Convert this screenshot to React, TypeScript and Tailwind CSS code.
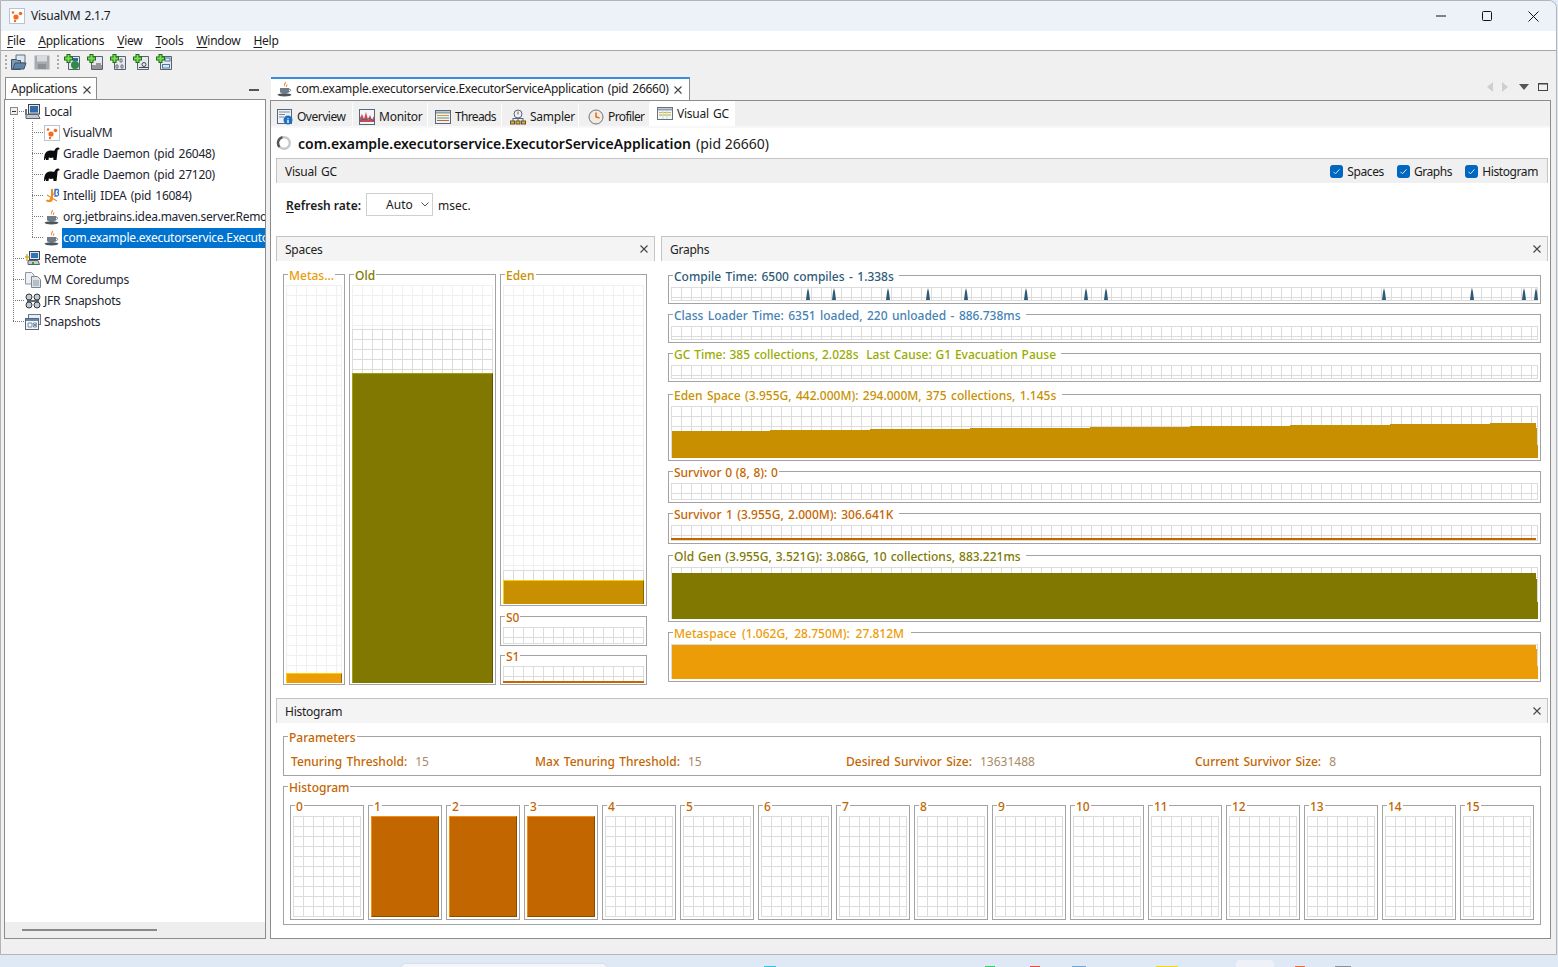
import type { ReactNode } from "react";

const GRID_DARK =
  "border-r border-b border-[#dcdcdc] bg-[linear-gradient(#dcdcdc_1px,transparent_1px),linear-gradient(90deg,#dcdcdc_1px,transparent_1px)] bg-[size:10px_10px]";
const GRID_LIGHT =
  "border-r border-[#f0f0f0] bg-[linear-gradient(#f0f0f0_1px,transparent_1px),linear-gradient(90deg,#f0f0f0_1px,transparent_1px)] bg-[size:10px_10px]";

const spikes = [808, 834, 888, 928, 966, 1026, 1086, 1106, 1384, 1472, 1524, 1536];

const edenPoints =
  "1,52 1,25 99,25 99,24 199,24 199,23 299,23 299,22 419,22 419,21 519,21 519,20 619,20 619,19 719,19 719,18 819,18 819,17 865,17 865,22 866,22 866,39 867,39 867,52";

function Icon({ children, className = "" }: { children: ReactNode; className?: string }) {
  return (
    <svg viewBox="0 0 16 16" className={`h-4 w-4 shrink-0 ${className}`} fill="none">
      {children}
    </svg>
  );
}

function VmIcon() {
  return (
    <Icon>
      <rect x="0.500" y="0.500" width="15" height="15" fill="#fff" stroke="#b9c4d0" />
      <circle cx="7" cy="9" r="2.600" fill="#f26b21" />
      <circle cx="11.500" cy="5.500" r="1.800" fill="#f26b21" />
      <circle cx="4" cy="4.500" r="1.300" fill="#f26b21" />
      <circle cx="6" cy="13" r="1.200" fill="#f26b21" />
    </Icon>
  );
}

function JavaIcon() {
  return (
    <Icon>
      <path d="M8.500 0.500c1.500 2-1.800 3-.8 5.500C6 4.500 7.500 2.500 8.500 0.500z" fill="#e8741e" />
      <path d="M10.300 3c.4 1.500-1 2-.8 3.500C8.300 5.500 9 4 10.300 3z" fill="#e8741e" />
      <path d="M3 7h9v3.500c0 1.500-1.700 2-4.500 2s-4.500-.5-4.500-2z" fill="#6f7c87" />
      <path d="M12 8c2.200 0 2.200 2.600-.4 2.700" stroke="#6f7c87" />
      <ellipse cx="7.500" cy="13.800" rx="7" ry="1.600" fill="#4a565f" />
    </Icon>
  );
}

function GradleIcon() {
  return (
    <Icon>
      <path
        d="M0 14C0 8 2 4.500 6 4.500c2 0 3 .5 4.500 0 .5-1.500 1.500-3 3.500-3 1.500 0 2 1.500 1 2.200-.9-.6-1.300-.1-1.500 1.300-.3 3-.6 6-1 9H9.500L9.200 11.500c-1.500.5-3 .5-4.400 0L4.500 14H2l-.2-2.200L1 14z"
        fill="#0c0c0c"
      />
    </Icon>
  );
}

function IdeaIcon() {
  return (
    <Icon>
      <path d="M8 1v9.500c0 3-4 3.500-5.500 1.500" stroke="#f28c1e" strokeWidth="2" />
      <path d="M3 7l10 6M5 13l7-11" stroke="#f28c1e" strokeWidth="1.200" />
      <path d="M11 1.500h2.500c1.500 0 1.500 3-.5 3 2.500 0 2 3.500-.5 3.500H11z" stroke="#2f6fd0" strokeWidth="1.300" />
    </Icon>
  );
}

function ComputerIcon() {
  return (
    <Icon>
      <rect x="3.500" y="0.500" width="11" height="9.500" fill="#dfe6ee" stroke="#3c4650" />
      <rect x="5" y="2" width="8" height="6.500" fill="#3469a8" />
      <path d="M1 10.500h12l2 4H1z" fill="#c4c9ce" stroke="#5a636c" />
      <path d="M1 5v6" stroke="#6b747d" strokeWidth="2" />
    </Icon>
  );
}

function RemoteIcon() {
  return (
    <Icon>
      <rect x="4.500" y="0.500" width="10" height="8" fill="#dfe6ee" stroke="#3c4650" />
      <rect x="6" y="2" width="7" height="5" fill="#2f74b5" />
      <path d="M3 9.500h10l1.500 4H3z" fill="#c4c9ce" stroke="#5a636c" />
      <path d="M0 6h5M2 3v7" stroke="#b58a20" />
      <circle cx="2" cy="6" r="1.500" fill="#e8b020" />
      <path d="M7 12h2" stroke="#35a035" strokeWidth="2" />
    </Icon>
  );
}

function DumpIcon() {
  return (
    <Icon>
      <path d="M0.500 0.500h6l2.500 2.500v9H0.500z" fill="#eef1f4" stroke="#8b96a0" />
      <path d="M6.500 4.500h6l3 3v8h-9z" fill="#dfe4ea" stroke="#7a8590" />
      <path d="M8 9h6M8 11h6M8 13h6" stroke="#8b96a0" />
    </Icon>
  );
}

function JfrIcon() {
  return (
    <Icon>
      <circle cx="4" cy="4" r="3" fill="#c5cad0" stroke="#2f3840" />
      <circle cx="12" cy="4" r="3" fill="#c5cad0" stroke="#2f3840" />
      <circle cx="4" cy="12" r="3" fill="#c5cad0" stroke="#2f3840" />
      <circle cx="12" cy="12" r="3" fill="#c5cad0" stroke="#2f3840" />
      <path d="M2 8h12" stroke="#2f3840" strokeWidth="1.500" />
    </Icon>
  );
}

function SnapshotIcon() {
  return (
    <Icon>
      <rect x="3.500" y="0.500" width="12" height="10" fill="#e8edf3" stroke="#6c7a88" />
      <rect x="0.500" y="4.500" width="13" height="11" fill="#f3f6f9" stroke="#56677a" />
      <path d="M1 5h12v2H1z" fill="#5b89b8" />
      <path d="M3 9h4v4H3zM8.500 9h3v1.500h-3zM8.500 11.500h3V13h-3z" stroke="#7c8a98" />
    </Icon>
  );
}

function ToolDoc({ children }: { children: ReactNode }) {
  return (
    <Icon>
      <path d="M4.500 2.500h11v13h-11z" fill="#e6eaee" stroke="#56636e" />
      {children}
      <path d="M4.500 0v9M0 4.500h9" stroke="#1e6a1e" strokeWidth="4" />
      <path d="M4.500 1v7M1 4.500h7" stroke="#7ae04a" strokeWidth="2" />
    </Icon>
  );
}

function CloseGlyph({ className = "" }: { className?: string }) {
  return (
    <svg viewBox="0 0 8 8" className={`h-2 w-2 shrink-0 ${className}`} fill="none">
      <path d="M0.500 0.500l7 7M7.500 0.500l-7 7" stroke="#444" strokeWidth="1.100" />
    </svg>
  );
}

function Mnemonic({ text }: { text: string }) {
  return (
    <span>
      <span className="underline underline-offset-2">{text[0]}</span>
      {text.slice(1)}
    </span>
  );
}

function TreeRow({
  level,
  icon,
  label,
  selected,
}: {
  level: 1 | 2;
  icon: ReactNode;
  label: string;
  selected?: boolean;
}) {
  return (
    <div className={`relative flex h-[21px] items-center ${level === 1 ? "pl-[19px]" : "pl-[38px]"}`}>
      <span
        className={`absolute top-[10px] h-0 border-t border-dotted border-[#777] ${
          level === 1 ? "left-[7px] w-[11px]" : "left-[26px] w-[11px]"
        }`}
      />
      {icon}
      <span
        className={`ml-[2px] flex flex-1 items-center overflow-hidden whitespace-nowrap pl-px ${
          selected ? "h-[20px] bg-[#0072cf] text-white" : "h-[21px] text-[#1b2530]"
        }`}
      >
        {label}
      </span>
    </div>
  );
}

function LeftPanel() {
  return (
    <div className="flex w-[262px] flex-col">
      <div className="flex h-[23px] items-end pl-px">
        <div className="relative flex h-[22px] w-[92px] items-center border border-b-0 border-[#8c8c8c] bg-white pl-[5px] pt-px">
          Applications
          <CloseGlyph className="absolute left-[77px] top-[8px]" />
        </div>
        <div className="mb-[8px] ml-auto mr-[7px] h-px w-[10px] border-t-2 border-[#555]" />
      </div>
      <div className="flex flex-1 flex-col border border-[#8c8c8c] bg-white">
        <div className="relative flex-1 pl-px pt-[1px]">
          <span className="absolute left-[8px] top-[18px] h-[203px] border-l border-dotted border-[#777]" />
          <span className="absolute left-[27px] top-[22px] h-[115px] border-l border-dotted border-[#777]" />
          <TreeRow level={1} icon={<ComputerIcon />} label="Local" />
          <span className="absolute left-[5px] top-[7px] flex h-[8px] w-[8px] items-center justify-center border border-[#8a8a8a] bg-[#eef0f2]">
            <span className="h-px w-[4px] bg-[#333]" />
          </span>
          <TreeRow level={2} icon={<VmIcon />} label="VisualVM" />
          <TreeRow level={2} icon={<GradleIcon />} label="Gradle Daemon (pid 26048)" />
          <TreeRow level={2} icon={<GradleIcon />} label="Gradle Daemon (pid 27120)" />
          <TreeRow level={2} icon={<IdeaIcon />} label="IntelliJ IDEA (pid 16084)" />
          <TreeRow level={2} icon={<JavaIcon />} label="org.jetbrains.idea.maven.server.RemoteMavenServer36" />
          <TreeRow level={2} icon={<JavaIcon />} label="com.example.executorservice.ExecutorServiceApplication" selected />
          <TreeRow level={1} icon={<RemoteIcon />} label="Remote" />
          <TreeRow level={1} icon={<DumpIcon />} label="VM Coredumps" />
          <TreeRow level={1} icon={<JfrIcon />} label="JFR Snapshots" />
          <TreeRow level={1} icon={<SnapshotIcon />} label="Snapshots" />
        </div>
        <div className="flex h-[16px] items-center bg-[#eeeeee] pl-[17px]">
          <div className="h-[2px] w-[135px] bg-[#888]" />
        </div>
      </div>
    </div>
  );
}

function SubTab({
  icon,
  label,
  className,
  active,
}: {
  icon: ReactNode;
  label: string;
  className: string;
  active?: boolean;
}) {
  return (
    <div
      className={`flex items-center gap-[4px] ${className} ${
        active ? "h-[25px] bg-white pt-px" : "mt-[2px] h-[23px] border-r border-white bg-[#f0f0f0] pt-[4px]"
      }`}
    >
      {icon}
      {label}
    </div>
  );
}

function Check({ label }: { label: string }) {
  return (
    <div className="flex items-center gap-[4px] pt-px tracking-[-0.4px]">
      <span className="flex h-[13px] w-[13px] items-center justify-center rounded-[3px] bg-[#0067c0]">
        <svg viewBox="0 0 9 9" className="h-[9px] w-[9px]" fill="none">
          <path d="M1.500 4.800l2 2 4-4.500" stroke="#cfe4f7" />
        </svg>
      </span>
      {label}
    </div>
  );
}

function PanelHeader({ title, close }: { title: string; close?: boolean }) {
  return (
    <div className="flex h-[25px] items-center justify-between border-x border-t border-[#c4c4c4] bg-[#f4f4f4] pl-[8px] pr-[6px] pt-px text-[#222]">
      {title}
      {close && <CloseGlyph className="mb-[2px]" />}
    </div>
  );
}

function Titled({
  title,
  color,
  className,
  children,
}: {
  title: string;
  color: string;
  className: string;
  children?: ReactNode;
}) {
  return (
    <div className={`relative border border-[#a3a3a3] ${className}`}>
      <span
        className={`absolute -top-[7px] left-[4px] whitespace-pre bg-white px-px font-medium leading-[16px] tracking-normal ${color}`}
      >
        {title}
      </span>
      {children}
    </div>
  );
}

function SpaceBar({
  title,
  color,
  className,
  lightClass,
  darkClass,
  barClass,
}: {
  title: string;
  color: string;
  className: string;
  lightClass: string;
  darkClass: string;
  barClass: string;
}) {
  return (
    <Titled title={title} color={color} className={`flex flex-col px-[2px] pb-[1px] pt-[10px] ${className}`}>
      <div className={`${GRID_LIGHT} ${lightClass}`} />
      <div className={`${GRID_DARK} border-b-0 ${darkClass}`} />
      <div className={barClass} />
    </Titled>
  );
}

function SpacesPanel() {
  return (
    <div className="flex w-[379px] flex-col">
      <PanelHeader title="Spaces" close />
      <div className="flex gap-[4px] pl-[7px] pt-[13px]">
        <SpaceBar
          title="Metas..."
          color="text-[#eb9c07]"
          className="h-[411px] w-[62px]"
          lightClass="flex-1"
          darkClass="h-0"
          barClass="h-[10px] border-t border-l border-t-[#ffcc00] border-l-[#ffcc00] border-r border-r-[#9c6800] bg-[#eb9c07]"
        />
        <SpaceBar
          title="Old"
          color="text-[#807800]"
          className="h-[411px] w-[147px]"
          lightClass="h-[44px]"
          darkClass="h-[44px]"
          barClass="flex-1 border-t border-l border-t-[#a8a000] border-l-[#a8a000] border-r border-r-[#5c5600] bg-[#807800]"
        />
        <div className="flex w-[147px] flex-col">
          <SpaceBar
            title="Eden"
            color="text-[#c89000]"
            className="h-[332px]"
            lightClass="flex-1"
            darkClass="h-[10px]"
            barClass="h-[24px] border-t border-l border-t-[#ffcc00] border-l-[#ffcc00] border-r border-r-[#8f6700] bg-[#c89000]"
          />
          <Titled title="S0" color="text-[#c46500]" className="mt-[10px] flex h-[30px] flex-col px-[2px] pb-[1px] pt-[10px]">
            <div className={`flex-1 ${GRID_DARK}`} />
          </Titled>
          <Titled title="S1" color="text-[#c46500]" className="mt-[9px] flex h-[30px] flex-col px-[2px] pb-[1px] pt-[10px]">
            <div className={`flex-1 ${GRID_DARK} border-b-0`} />
            <div className="h-[2px] bg-[#c46500]" />
          </Titled>
        </div>
      </div>
    </div>
  );
}

function GraphBox({
  title,
  color,
  className,
  children,
}: {
  title: string;
  color: string;
  className: string;
  children?: ReactNode;
}) {
  return (
    <Titled title={title} color={color} className={`flex flex-col px-[2px] pb-[2px] pt-[11px] ${className}`}>
      <div className={`relative flex-1 ${GRID_DARK}`}>{children}</div>
    </Titled>
  );
}

function Chart({ points, fill }: { points: string; fill: string }) {
  return (
    <svg className="absolute inset-0 h-full w-full overflow-visible" fill="none">
      <polygon points={points} fill={fill} />
    </svg>
  );
}

function GraphsPanel() {
  return (
    <div className="flex w-[887px] flex-col">
      <PanelHeader title="Graphs" close />
      <div className="flex flex-col px-[7px] pt-[14px] [word-spacing:1.300px]">
        <GraphBox title="Compile Time: 6500 compiles - 1.338s " color="text-[#2d5a78]" className="h-[29px]">
          <svg className="absolute inset-0 h-full w-full overflow-visible" fill="none">
            {spikes.map((s) => (
              <polygon key={s} points={`${s - 673},13 ${s - 672},5 ${s - 671},1 ${s - 670},5 ${s - 669},13`} fill="#2f5a73" />
            ))}
          </svg>
        </GraphBox>
        <GraphBox title="Class Loader Time: 6351 loaded, 220 unloaded - 886.738ms " color="text-[#4682b4]" className="mt-[10px] h-[29px]" />
        <GraphBox
          title="GC Time: 385 collections, 2.028s  Last Cause: G1 Evacuation Pause "
          color="text-[#9aab00]"
          className="mt-[10px] h-[29px] [word-spacing:0.700px]"
        />
        <GraphBox title="Eden Space (3.955G, 442.000M): 294.000M, 375 collections, 1.145s " color="text-[#c89000]" className="mt-[12px] h-[67px]">
          <Chart points={edenPoints} fill="#c89000" />
        </GraphBox>
        <GraphBox title="Survivor 0 (8, 8): 0" color="text-[#c46500]" className="mt-[10px] h-[32px] [word-spacing:0.600px]" />
        <GraphBox title="Survivor 1 (3.955G, 2.000M): 306.641K " color="text-[#c46500]" className="mt-[10px] h-[31px]">
          <div className="absolute bottom-0 left-0 h-[2px] w-[865px] bg-[#c46500]" />
        </GraphBox>
        <GraphBox
          title="Old Gen (3.955G, 3.521G): 3.086G, 10 collections, 883.221ms "
          color="text-[#807800]"
          className="mt-[11px] h-[67px] [word-spacing:0.900px]"
        >
          <Chart points="1,52 1,6 865,6 865,12 866,12 866,35 867,35 867,52" fill="#807800" />
        </GraphBox>
        <GraphBox
          title="Metaspace (1.062G, 28.750M): 27.812M "
          color="text-[#eb9c07]"
          className="mt-[10px] h-[50px] [word-spacing:2.600px]"
        >
          <Chart points="1,35 1,1 865,1 865,5 866,5 866,22 867,22 867,35" fill="#eb9c07" />
        </GraphBox>
      </div>
    </div>
  );
}

function Param({ label, value, className }: { label: string; value: string; className: string }) {
  return (
    <div className={`flex shrink-0 gap-[8px] ${className}`}>
      <span className="font-medium tracking-normal text-[#c46500] [word-spacing:1.300px]">{label}</span>
      <span className="tracking-normal text-[#a88a66]">{value}</span>
    </div>
  );
}

function HistogramPanel() {
  const cells = Array.from({ length: 16 }, (_, i) => i);
  return (
    <div className="flex flex-col">
      <PanelHeader title="Histogram" close />
      <div className="flex flex-col px-[7px] pt-[13px]">
        <Titled title="Parameters" color="text-[#c46500]" className="flex h-[40px] items-center pl-[7px] pt-[11px]">
          <Param label="Tenuring Threshold:" value="15" className="w-[244px]" />
          <Param label="Max Tenuring Threshold:" value="15" className="w-[311px]" />
          <Param label="Desired Survivor Size:" value="13631488" className="w-[349px]" />
          <Param label="Current Survivor Size:" value="8" className="w-[200px]" />
        </Titled>
        <Titled title="Histogram" color="text-[#c46500]" className="mt-[10px] flex h-[139px] gap-[4px] pl-[6px] pt-[18px]">
          {cells.map((i) => (
            <Titled key={i} title={String(i)} color="text-[#c46500]" className="flex h-[115px] w-[74px] flex-col px-[2px] pb-[2px] pt-[10px]">
              {i >= 1 && i <= 3 ? (
                <div className="flex-1 border-y border-x border-t-[#ff8c00] border-l-[#ff8c00] border-r-[#8a4a00] border-b-[#8a4a00] bg-[#c26600]" />
              ) : (
                <div className={`flex-1 ${GRID_DARK}`} />
              )}
            </Titled>
          ))}
        </Titled>
      </div>
    </div>
  );
}

export default function App() {
  return (
    <div className="h-[967px] w-[1558px] overflow-hidden bg-[#dfe8f5] font-['Noto_Sans','Liberation_Sans',sans-serif] text-[12px] leading-[16px] tracking-[-0.25px] text-[#1b1b1b] [word-spacing:1.300px]">
      <div className="flex h-[955px] w-[1557px] flex-col rounded-tr-[8px] border border-[#b4b4b4] bg-[#f0f0f0]">
        {/* title bar */}
        <div className="flex h-[30px] items-center rounded-tr-[8px] bg-[#edf2f9] pl-[8px]">
          <VmIcon />
          <span className="ml-[6px]">VisualVM 2.1.7</span>
          <div className="ml-auto flex items-center gap-[36px] pr-[17px]">
            <svg viewBox="0 0 10 10" className="h-[10px] w-[10px]" fill="none">
              <path d="M0 5h10" stroke="#111" />
            </svg>
            <svg viewBox="0 0 10 10" className="h-[10px] w-[10px]" fill="none">
              <rect x="0.500" y="0.500" width="9" height="9" rx="1" stroke="#111" />
            </svg>
            <svg viewBox="0 0 11 11" className="h-[11px] w-[11px]" fill="none">
              <path d="M0.500 0.500l10 10M10.500 0.500l-10 10" stroke="#111" />
            </svg>
          </div>
        </div>
        {/* menu */}
        <div className="flex h-[20px] items-center gap-[13px] border-b border-[#a8a8a8] bg-white pl-[6px] pt-px">
          <Mnemonic text="File" />
          <Mnemonic text="Applications" />
          <Mnemonic text="View" />
          <Mnemonic text="Tools" />
          <Mnemonic text="Window" />
          <Mnemonic text="Help" />
        </div>
        {/* toolbar */}
        <div className="flex h-[25px] items-center pb-[3px] pl-[4px]">
          <span className="h-[14px] border-l-2 border-dotted border-[#aaa]" />
          <svg viewBox="0 0 16 16" className="ml-[4px] h-4 w-4" fill="none">
            <path d="M5 1h9v8H5z" fill="#dfe6ee" stroke="#5c7388" />
            <path d="M0.500 5.500h5l1 1h3v9h-9z" fill="#7f9ab3" stroke="#3f5468" />
            <path d="M2 15l2-6h11l-2 6z" fill="#5f86a8" stroke="#3f5468" />
          </svg>
          <svg viewBox="0 0 16 16" className="ml-[7px] h-4 w-4" fill="none">
            <rect x="0.500" y="1.500" width="15" height="14" fill="#a5abb0" />
            <rect x="3" y="1.500" width="10" height="6" fill="#d8dbde" />
            <rect x="4" y="10" width="8" height="5" fill="#8b9196" />
          </svg>
          <span className="ml-[7px] h-[14px] border-l-2 border-dotted border-[#aaa]" />
          <div className="ml-[5px] flex gap-[7px]">
            <ToolDoc>
              <circle cx="11" cy="11" r="4" fill="#2f8a4a" />
              <path d="M9 4h5v3H9z" fill="#3469a8" />
            </ToolDoc>
            <ToolDoc>
              <path d="M5 12h10M5 14h10M9 10h5" stroke="#444" />
            </ToolDoc>
            <ToolDoc>
              <path d="M10 5h2v3h-2zM6 11h2v3H6zM11 11h2v3h-2z" stroke="#556" strokeWidth="0.800" />
            </ToolDoc>
            <ToolDoc>
              <path d="M6 13.500h9" stroke="#444" />
              <circle cx="11" cy="10.500" r="2" stroke="#444" />
            </ToolDoc>
            <ToolDoc>
              <rect x="9" y="4" width="5" height="3" fill="#dbe6f0" stroke="#4b7ba8" />
              <rect x="6.500" y="10.500" width="7" height="3.500" fill="#dbe6f0" stroke="#4b7ba8" />
            </ToolDoc>
          </div>
        </div>
        {/* workspace */}
        <div className="flex flex-1 gap-[4px] pb-[15px] pl-[3px]">
          <LeftPanel />
          <div className="flex w-[1281px] flex-col">
            {/* document tab strip */}
            <div className="flex h-[24px] items-end">
              <div className="ml-px flex h-[23px] w-[419px] items-center border-t-2 border-r border-t-[#3a8ee0] border-r-[#8c8c8c] bg-white pb-[2px] pl-[6px] tracking-[-0.28px]">
                <JavaIcon />
                <span className="ml-[3px] whitespace-nowrap">com.example.executorservice.ExecutorServiceApplication (pid 26660)</span>
                <CloseGlyph className="ml-[5px] mt-[2px]" />
              </div>
              <div className="mb-[8px] ml-auto mr-[3px] flex items-center gap-[9px]">
                <svg viewBox="0 0 6 10" className="h-[10px] w-[6px]">
                  <path d="M6 0v10L0 5z" fill="#cfcfcf" />
                </svg>
                <svg viewBox="0 0 6 10" className="h-[10px] w-[6px]">
                  <path d="M0 0v10l6-5z" fill="#cfcfcf" />
                </svg>
                <svg viewBox="0 0 10 6" className="ml-[2px] h-[6px] w-[10px]">
                  <path d="M0 0h10L5 6z" fill="#555" />
                </svg>
                <svg viewBox="0 0 10 8" className="h-[8px] w-[10px]" fill="none">
                  <rect x="0.500" y="0.500" width="9" height="7" stroke="#444" />
                  <path d="M0 1h10" stroke="#444" />
                </svg>
              </div>
            </div>
            <div className="flex flex-1 flex-col border border-[#8c8c8c] bg-white">
              {/* view tabs */}
              <div className="flex h-[27px] border-b-2 border-[#f8f8f8] bg-[#f0f0f0] pl-[1px]">
                <SubTab
                  className="w-[81px] pl-[5px] tracking-[-0.5px]"
                  label="Overview"
                  icon={
                    <Icon>
                      <rect x="0.500" y="0.500" width="14" height="14" fill="#eef2f6" stroke="#55687a" />
                      <path d="M2 3h11M2 5.500h6M2 8h5" stroke="#7b8c9c" />
                      <circle cx="11" cy="11" r="4.500" fill="#1f6fc0" />
                      <path d="M11 9v.8M11 10.800V14" stroke="#fff" strokeWidth="1.400" />
                    </Icon>
                  }
                />
                <SubTab
                  className="w-[75px] pl-[6px]"
                  label="Monitor"
                  icon={
                    <Icon>
                      <rect x="0.500" y="0.500" width="15" height="15" fill="#f3f5f8" stroke="#55687a" />
                      <path d="M1 13V9l2-4 2 5 2-7 2 8 2-5 2 5 2-4v6z" fill="#cf4a4a" />
                      <path d="M1 13l3-3 3 1 3-2 5 3" stroke="#3469a8" />
                    </Icon>
                  }
                />
                <SubTab
                  className="w-[74px] pl-[7px] tracking-[-0.65px]"
                  label="Threads"
                  icon={
                    <Icon>
                      <rect x="0.500" y="1.500" width="15" height="13" fill="#eef2f6" stroke="#55687a" />
                      <path d="M1 3.500h14" stroke="#8fa0b0" strokeWidth="2" />
                      <path d="M2 6.500h12" stroke="#e09a30" />
                      <path d="M2 9h12" stroke="#5aa04a" />
                      <path d="M2 11.500h12" stroke="#c85a4a" />
                    </Icon>
                  }
                />
                <SubTab
                  className="w-[77px] pl-[8px]"
                  label="Sampler"
                  icon={
                    <Icon>
                      <circle cx="8" cy="5" r="4" fill="#eef2f6" stroke="#55687a" />
                      <path d="M8 2.500v3" stroke="#b04030" />
                      <path d="M3 9v3M8 9v3M13 9v3M3 9.500h10" stroke="#55687a" />
                      <rect x="0.500" y="12" width="4" height="3" fill="#e0b050" stroke="#6a5020" />
                      <rect x="6" y="12" width="4" height="3" fill="#e0b050" stroke="#6a5020" />
                      <rect x="11.500" y="12" width="4" height="3" fill="#e0b050" stroke="#6a5020" />
                    </Icon>
                  }
                />
                <SubTab
                  className="w-[71px] pl-[9px] tracking-[-0.6px]"
                  label="Profiler"
                  icon={
                    <Icon>
                      <circle cx="8" cy="8" r="7" fill="#f2ece0" stroke="#6a7580" />
                      <path d="M8 3.500V8l3.500 1" stroke="#e06a20" strokeWidth="1.500" />
                    </Icon>
                  }
                />
                <SubTab
                  active
                  className="w-[85px] pl-[7px]"
                  label="Visual GC"
                  icon={
                    <Icon>
                      <rect x="0.500" y="1.500" width="15" height="12" fill="#f3f5f8" stroke="#66727e" />
                      <path d="M1 3.500h14" stroke="#8fa0b0" strokeWidth="2" />
                      <path d="M2 6.500h12" stroke="#e0b030" />
                      <path d="M2 9h12" stroke="#8fbf30" />
                      <path d="M6 5v8M10 5v8" stroke="#d4d8dc" />
                    </Icon>
                  }
                />
              </div>
              <div className="flex flex-col pl-[5px] pr-[2px]">
                <div className="flex h-[30px] items-center text-[14px] tracking-normal [word-spacing:0px]">
                  <svg viewBox="0 0 16 16" className="mb-[1px] h-4 w-4" fill="none">
                    <circle cx="8" cy="8" r="5.800" stroke="#c8c8c8" strokeWidth="2.400" />
                    <path d="M3.500 12a6 6 0 0 1 3-9.800" stroke="#555" strokeWidth="2.400" />
                  </svg>
                  <span className="ml-[6px] pt-px font-semibold text-[#111]">com.example.executorservice.ExecutorServiceApplication</span>
                  <span className="ml-[5px] pt-px text-[#222]">(pid 26660)</span>
                </div>
                <div className="flex h-[25px] items-center justify-between border-x border-t border-[#c4c4c4] bg-[#f0f0f0] pl-[8px] pr-[9px]">
                  <span className="pt-px">Visual GC</span>
                  <div className="flex gap-[13px]">
                    <Check label="Spaces" />
                    <Check label="Graphs" />
                    <Check label="Histogram" />
                  </div>
                </div>
                <div className="flex h-[53px] items-start pl-[10px] pt-[10px] tracking-normal [word-spacing:0px]">
                  <span className="mt-[5px] font-semibold">
                    <Mnemonic text="Refresh rate:" />
                  </span>
                  <div className="ml-[5px] flex h-[23px] w-[67px] items-center border border-[#cfcfcf] pl-[19px]">
                    Auto
                    <svg viewBox="0 0 8 5" className="ml-[8px] h-[5px] w-[8px]" fill="none">
                      <path d="M0.500 0.500L4 4l3.500-3.500" stroke="#555" />
                    </svg>
                  </div>
                  <span className="ml-[5px] mt-[5px]">msec.</span>
                </div>
                <div className="flex h-[462px] gap-[6px]">
                  <SpacesPanel />
                  <GraphsPanel />
                </div>
                <HistogramPanel />
              </div>
            </div>
          </div>
        </div>
      </div>
      {/* bits of the desktop taskbar under the window */}
      <div className="relative h-[12px]">
        <span className="absolute left-[400px] top-[8px] h-[6px] w-[208px] rounded-t-[8px] border border-[#d8dde6] bg-[#f4f6fa]" />
        <span className="absolute left-[764px] top-[11px] h-[2px] w-[12px] bg-[#2fc6d8]" />
        <span className="absolute left-[985px] top-[11px] h-[2px] w-[10px] bg-[#2ecc71]" />
        <span className="absolute left-[1030px] top-[11px] h-[2px] w-[10px] bg-[#e84a3c]" />
        <span className="absolute left-[1072px] top-[11px] h-[2px] w-[14px] bg-[#6aa8dc]" />
        <span className="absolute left-[1156px] top-[11px] h-[2px] w-[22px] bg-[#f5d90a]" />
        <span className="absolute left-[1236px] top-[5px] h-[8px] w-[38px] rounded-t-[4px] bg-[#eef2f8]" />
        <span className="absolute left-[1295px] top-[11px] h-[2px] w-[10px] bg-[#f0683a]" />
        <span className="absolute left-[1335px] top-[11px] h-[2px] w-[16px] bg-[#8a8f98]" />
      </div>
    </div>
  );
}
